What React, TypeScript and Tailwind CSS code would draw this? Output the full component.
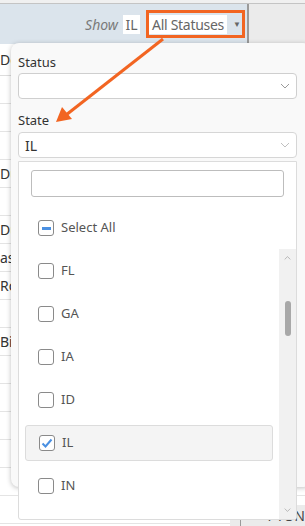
import React from 'react';

const rows = ['', '', '', 'Du', '', 'Du', 'as', 'Rc', '', 'Bi', '', '', '', '', '', ''];
const states = ['FL', 'GA', 'IA', 'ID', 'IL', 'IN'];

const Chevron: React.FC<{ up?: boolean; className?: string }> = ({ up, className }) => (
    <svg width="10" height="6" viewBox="0 0 10 6" className={className}>
        <path d={up ? 'M1 5 L5 1 L9 5' : 'M1 1 L5 5 L9 1'} fill="none" stroke="currentColor" strokeWidth="1" />
    </svg>
);

const Checkbox: React.FC<{ state?: 'on' | 'mixed' }> = ({ state }) => (
    <span className="w-[16px] h-[16px] rounded-[3px] border border-[#8a8a8a] bg-white flex items-center justify-center shrink-0">
        {state === 'mixed' && <span className="w-[9px] h-[3px] bg-[#4a90e2]" />}
        {state === 'on' && (
            <svg width="12" height="10" viewBox="0 0 12 10">
                <path d="M1.5 5.5 L4.5 8.5 L10.5 1.5" fill="none" stroke="#4a90e2" strokeWidth="2" />
            </svg>
        )}
    </span>
);

export default function App() {
    return (
        <div className="relative w-[305px] h-[526px] overflow-hidden bg-white text-[#333] font-['Noto_Sans','Open_Sans',sans-serif]">
            {/* Header */}
            <div className="h-[3px] bg-[#f0f0f0]" />
            <div className="flex h-[41px] border-t border-[#c4c4c4]">
                <div className="w-[247px] bg-[#dbe4ec] flex items-center justify-end pr-[2px]">
                    <span className="italic text-[14px] text-[#7a7a7a]">Show</span>
                    <span className="ml-[5px] bg-white h-[19px] w-[17px] flex items-center justify-center text-[14px] text-[#666]">IL</span>
                    <div className="ml-[6px] flex items-center h-[28px] border-[3px] border-[#f26522]">
                        <span className="bg-white h-[19px] w-[78px] flex items-center justify-center text-[14px] text-[#666] tracking-[-0.3px]">All Statuses</span>
                        <span className="ml-[6px] mr-[3px] w-[6px] text-[8px] text-[#666]">▼</span>
                    </div>
                </div>
                <div className="w-[2px] bg-[#9a9a9a]" />
                <div className="flex-1 bg-[#ebebeb]" />
            </div>

            {/* Table behind */}
            <div className="flex flex-col">
                <div className="h-[32px] flex items-center border-b border-[#ddd] text-[14px]">De</div>
                {rows.map((r, i) => (
                    <div key={i} className="h-[28px] flex items-center border-b border-[#e4e4e4] text-[14px]">{r}</div>
                ))}
            </div>
            <div className="absolute right-0 bottom-0 w-[75px] h-[21px] bg-[#ebebeb] flex">
                <div className="w-[17px]" />
                <div className="w-[1px] bg-[#9a9a9a]" />
                <span className="ml-[27px] text-[14px] leading-[21px] text-[#444]">PTON</span>
            </div>

            {/* Filter panel */}
            <div className="absolute left-[11px] top-[43px] w-[300px] h-[444px] bg-[#f9f9f9] rounded-[8px] shadow-[0_1px_5px_rgba(0,0,0,0.25)] pl-[7px] pr-[14px] pt-[10px]">
                <div className="text-[13px] text-[#333] leading-[18px]">Status</div>
                <div className="mt-[2px] h-[26px] bg-white border border-[#cfcfcf] rounded-[4px] flex items-center justify-end pr-[6px] text-[#9a9a9a]">
                    <Chevron />
                </div>
                <div className="mt-[12px] text-[13px] text-[#333] leading-[18px]">State</div>
                <div className="mt-[3px] h-[26px] bg-white border border-[#d6d6d6] rounded-[4px] flex items-center justify-between pl-[6px] pr-[6px] text-[#c0c0c0]">
                    <span className="text-[14px] text-[#333]">IL</span>
                    <Chevron />
                </div>
            </div>

            {/* State dropdown list */}
            <div className="absolute left-[18px] top-[161px] w-[279px] h-[359px] bg-white border border-[#dcdcdc] rounded-b-[3px] flex flex-col">
                <div className="mx-[12px] mt-[8px] h-[27px] border border-[#bdbdbd] rounded-[3px]" />
                <div className="flex flex-1 mt-[13px]">
                    <div className="flex-1 pl-[6px] pr-[6px]">
                        <div className="h-[36px] flex items-center gap-[7px] pl-[13px] text-[13px] text-[#555]">
                            <Checkbox state="mixed" />
                            <span>Select All</span>
                        </div>
                        {states.map(s => (
                            <div
                                key={s}
                                className={`mt-[7px] h-[36px] flex items-center gap-[7px] pl-[13px] text-[13px] text-[#555] rounded-[3px] ${s === 'IL' ? 'bg-[#f4f4f4] border border-[#dcdcdc] pl-[12px]' : ''}`}
                            >
                                <Checkbox state={s === 'IL' ? 'on' : undefined} />
                                <span>{s}</span>
                            </div>
                        ))}
                    </div>
                    <div className="w-[17px] mt-[39px] bg-[#f1f1f1] flex flex-col items-center text-[#a0a0a0]">
                        <Chevron up className="mt-[6px] w-[7px]" />
                        <div className="mt-[40px] w-[6px] h-[35px] rounded-full bg-[#a8a8a8]" />
                        <div className="flex-1" />
                        <Chevron className="mb-[6px] w-[7px]" />
                    </div>
                </div>
            </div>

            {/* Annotation arrow */}
            <svg className="absolute inset-0 pointer-events-none" width="305" height="526">
                <line x1="163" y1="39" x2="66" y2="115" stroke="#f26522" strokeWidth="3" />
                <polygon points="56,122 62,107 72,119" fill="#f26522" />
            </svg>
        </div>
    );
}
